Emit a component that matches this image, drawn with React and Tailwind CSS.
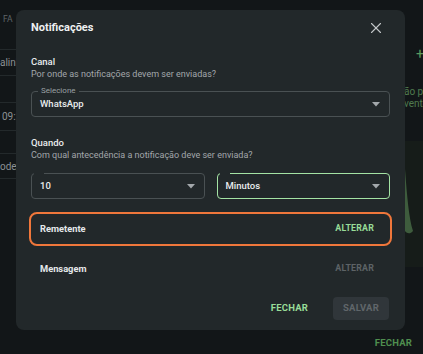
import { X } from 'lucide-react';

function Caret() {
  return (
    <svg width="8" height="5" viewBox="0 0 8 5" className="shrink-0">
      <path d="M0 0 L8 0 L4 4.5 Z" fill="#a3a8ab" />
    </svg>
  );
}

function Select({ value, label, active, className = '' }) {
  return (
    <div
      className={`relative h-[26px] rounded-[4px] border flex items-center justify-between pl-[8px] pr-[9px] ${
        active ? 'border-[#a4e3a4]' : 'border-[#4a5153]'
      } ${className}`}
    >
      {label ? (
        <span className="absolute left-[6px] top-[-6px] px-[3px] bg-[#22282a] text-[8px] leading-[10px] text-[#9ba1a4]">
          {label}
        </span>
      ) : (
        <span className="absolute left-[2px] top-[-2px] w-[10px] h-[3px] bg-[#22282a]" />
      )}
      <span className="text-[9.5px] font-medium text-[#e9eced]">{value}</span>
      <Caret />
    </div>
  );
}

function Row({ title, highlight, actionDisabled }) {
  return (
    <div
      className={`h-[34px] mx-[-2px] rounded-[8px] border-2 flex items-center justify-between pl-[9px] pr-[16px] ${
        highlight ? 'border-[#f0773b]' : 'border-transparent'
      }`}
    >
      <span className="text-[9.3px] font-bold text-[#e6e9ea]">{title}</span>
      <span
        className={`text-[8.8px] font-bold tracking-[0.2px] ${
          actionDisabled ? 'text-[#5d6366]' : 'text-[#98dc98]'
        }`}
      >
        ALTERAR
      </span>
    </div>
  );
}

export default function App() {
  return (
    <div
      className="relative w-[423px] h-[354px] overflow-hidden bg-[#121618] flex flex-col"
      style={{ fontFamily: 'Roboto, "Liberation Sans", sans-serif' }}
    >
      {/* page behind the dialog */}
      <div className="h-[333px] flex">
        <div className="w-[16px] shrink-0 overflow-hidden whitespace-nowrap text-[10px] text-[#8c9194]">
          <div className="h-[49px] pt-[13px] pl-[3px] text-[8.5px] text-[#5f6568]">FA</div>
          <div className="h-[26px] border-t border-[#23292b] flex items-center">alink</div>
          <div className="h-[27px] border-t border-[#23292b]" />
          <div className="h-[28px] border-t border-[#23292b] flex items-center pl-[2px]">09:30</div>
          <div className="h-[23px] border-t border-[#23292b]" />
          <div className="h-[25px] border-t border-[#23292b] flex items-center">ode</div>
          <div className="border-t border-[#23292b]" />
        </div>
        <div className="flex-1" />
        <div className="w-[18px] shrink-0 overflow-hidden whitespace-nowrap flex flex-col">
          <div className="h-[46px]" />
          <div className="text-[14px] leading-[16px] text-[#5d9a5d] pl-[11px]">+</div>
          <div className="mt-[24px] text-[10px] leading-[12px] text-[#4f7a4f]">
            <div className="ml-[-1px]">ão pr</div>
            <div className="ml-[-1px]">ventos</div>
          </div>
          <div className="mt-[31px] h-[126px] bg-[#161c19] flex items-center">
            <svg width="18" height="126" viewBox="0 0 18 126" className="shrink-0">
              <path d="M0 28 C2 55 4 78 8 90 C5 94 1 92 0 90 Z" fill="#3e5c3d" />
            </svg>
          </div>
        </div>
      </div>
      <div className="flex justify-end pr-[11px]">
        <span className="text-[9.5px] font-bold text-[#4f8e4f] tracking-[0.2px] leading-[20px]">FECHAR</span>
      </div>

      {/* dialog */}
      <div className="absolute left-[16px] top-[10px] w-[389px] h-[320px] rounded-[8px] bg-[#22282a] px-[15px] flex flex-col">
        <div className="h-[36px] flex items-center justify-between">
          <span className="text-[11px] font-bold text-[#eef0f1]">Notificações</span>
          <X size={18} strokeWidth={1.5} className="text-[#c3c7c9] mr-[5px]" />
        </div>

        <div className="mt-[9px] leading-[13px]">
          <div className="text-[9.5px] font-medium text-[#e9eced]">Canal</div>
          <div className="text-[9px] text-[#a2a7aa]">Por onde as notificações devem ser enviadas?</div>
        </div>
        <Select value="WhatsApp" label="Selecione" className="mt-[10px]" />

        <div className="mt-[19px] leading-[13px]">
          <div className="text-[9.5px] font-medium text-[#e9eced]">Quando</div>
          <div className="text-[9px] text-[#a2a7aa]">Com qual antecedência a notificação deve ser enviada?</div>
        </div>
        <div className="mt-[11px] grid grid-cols-2 gap-[12px]">
          <Select value="10" />
          <Select value="Minutos" active />
        </div>

        <div className="mt-[13px]">
          <Row title="Remetente" highlight />
        </div>
        <div className="mt-[6px]">
          <Row title="Mensagem" actionDisabled />
        </div>

        <div className="mt-[11px] flex items-center justify-end">
          <button className="h-[23px] px-[8px] text-[9.5px] font-bold text-[#98dc98] tracking-[0.2px]">FECHAR</button>
          <button className="ml-[17px] h-[23px] w-[56px] mr-[1px] rounded-[4px] bg-[#30363a] text-[9.5px] font-bold text-[#60666a] tracking-[0.2px]">
            SALVAR
          </button>
        </div>
      </div>
    </div>
  );
}
